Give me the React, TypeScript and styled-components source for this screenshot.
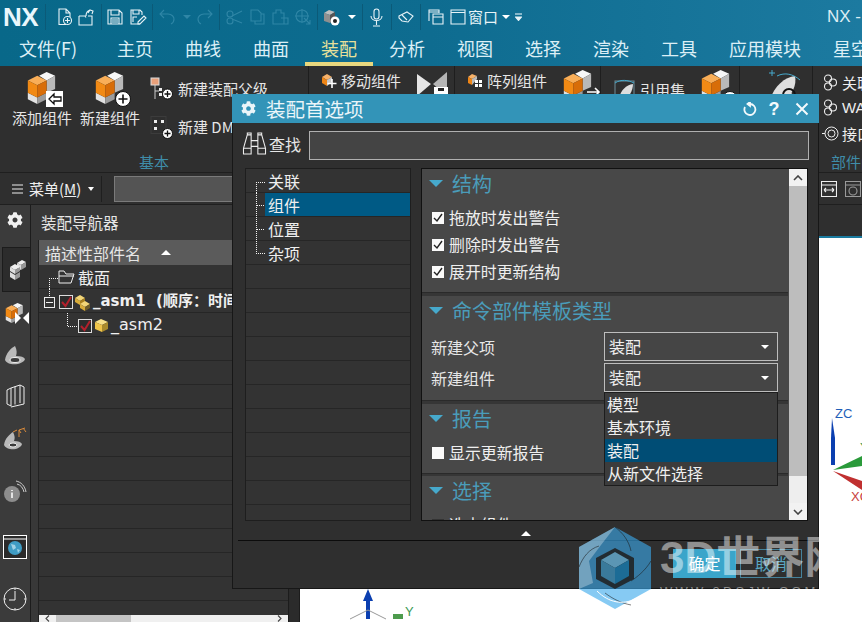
import React from "react";
import styled, { createGlobalStyle } from "styled-components";
import { FaCog } from "react-icons/fa";

const Global = createGlobalStyle`
  html, body { margin: 0; padding: 0; background: #fff; }
  * { box-sizing: border-box; }
  svg { display: block; flex: none; }
  body { font-family: "Noto Sans CJK SC", "Noto Sans", sans-serif; color: #e6e6e6; }
`;

const Page = styled.div`
  position: relative; width: 862px; height: 622px; overflow: hidden;
  display: flex; flex-direction: column; background: #2f2f2f;
`;

/* ---- title bar ---- */
const Head = styled.div`background: linear-gradient(90deg, #086889 0%, #0e6c90 50%, #1c7aa0 100%);`;
const QuickBar = styled.div`height: 34px; display: flex; align-items: center; white-space: nowrap; overflow: hidden;`;
const Logo = styled.div`
  width: 45px; padding-left: 3px; font: bold 26px/34px "Liberation Sans", sans-serif; color: #e9f6fb;
  letter-spacing: -0.5px; flex: none;
`;
const QSep = styled.span<{ $ml?: number }>`width: 1px; height: 26px; background: #0b5a78; margin-left: ${p => p.$ml ?? 0}px; flex: none;`;
const QIcon = styled.span<{ $ml: number; $off?: boolean }>`
  display: inline-flex; margin-left: ${p => p.$ml}px; flex: none;
  color: ${p => (p.$off ? "#2f86a6" : "#e8f3f7")};
`;
const QCaret = styled.span<{ $off?: boolean }>`
  display: block; width: 0; height: 0; border: 4px solid transparent; border-bottom: 0;
  border-top: 4px solid ${p => (p.$off ? "#2f86a6" : "#fff")};
`;
const QText = styled.span`margin-left: 2px; font-size: 15px; line-height: 20px; color: #e8f3f7;`;
const AppName = styled.span`margin-left: auto; font: 17px/20px "Liberation Sans", sans-serif; color: #dcedf3; width: 35px; flex: none; overflow: hidden;`;

const Tabs = styled.div`height: 32px; display: flex; padding-left: 3px; overflow: hidden;`;
const Tab = styled.div<{ $on?: boolean; $first?: boolean }>`
  padding: 0 16px; margin-right: ${p => (p.$first ? 8 : 0)}px; flex: none; font-size: 18px; line-height: 28px; white-space: nowrap;
  color: ${p => (p.$on ? "#e7e09a" : "#dceff6")};
  border-bottom: 4px solid ${p => (p.$on ? "#e8d77e" : "transparent")};
`;

/* ---- ribbon ---- */
const Ribbon = styled.div`height: 107px; display: flex; background: #2f2f2f; overflow: hidden; border-bottom: 1px solid #1f1f1f;`;
const BaseGroup = styled.div`
  width: 309px; flex: none; border-right: 1px solid #1e1e1e; display: flex; flex-direction: column;
`;
const GroupBody = styled.div`flex: 1; display: flex; padding: 6px 0 0 12px;`;
const GroupLabel = styled.div`height: 20px; font-size: 15px; line-height: 20px; color: #3f8da9; text-align: center; white-space: nowrap;`;
const BigTool = styled.div`
  width: 60px; margin-right: 8px; display: flex; flex-direction: column; align-items: center; font-size: 15px; line-height: 22px; white-space: nowrap;
`;
const IconStack = styled.span`position: relative; display: block; width: 34px; height: 34px; margin-bottom: 1px;`;
const Badge = styled.span<{ $r?: number; $b?: number }>`
  position: absolute; right: ${p => p.$r ?? -3}px; bottom: ${p => p.$b ?? 0}px; display: flex;
`;
const SmallCol = styled.div`display: flex; flex-direction: column; gap: 14px; margin: 5px 0 0 2px;`;
const SmallTool = styled.div`display: flex; align-items: center; gap: 5px; font-size: 15px; line-height: 24px; white-space: nowrap;`;
const RibbonCell = styled.div<{ $w: number; $pl: number }>`
  width: ${p => p.$w}px; padding: 4px 0 0 ${p => p.$pl}px; flex: none; border-right: 1px solid #1e1e1e;
  display: flex; align-items: flex-start;
`;
const CellTool = styled.div<{ $top?: number; $ml?: number }>`
  display: flex; align-items: center; gap: 4px; font-size: 15px; line-height: 22px; white-space: nowrap;
  margin-top: ${p => p.$top ?? 0}px; margin-left: ${p => p.$ml ?? 0}px; flex: none;
`;
const SideGroup = styled.div`flex: 1; padding: 4px 0 0 9px; display: flex; flex-direction: column; white-space: nowrap;`;
const SideTool = styled.div`display: flex; align-items: center; gap: 3px; height: 26.5px; font-size: 15px; color: #eee; font-family: "Liberation Sans", "Noto Sans CJK SC", sans-serif;`;
const SideLabel = styled.div`margin: 6px 0 0 9px; font-size: 15px; line-height: 20px; color: #3f8da9;`;

/* ---- menu row ---- */
const MenuRow = styled.div`height: 32px; display: flex; align-items: center; background: #2f2f2f; border-bottom: 1px solid #1f1f1f; flex: none;`;
const MenuBtn = styled.div`
  width: 102px; flex: none; padding-left: 12px; display: flex; align-items: center; gap: 6px; font-size: 15px;
  border-right: 1px solid #1f1f1f; height: 26px; color: #eee;
`;
const U = styled.span`text-decoration: underline;`;
const MenuCaret = styled.span`width: 0; height: 0; margin-left: 1px; border: 3.5px solid transparent; border-bottom: 0; border-top: 4px solid #fff;`;
const MenuInput = styled.div`width: 400px; height: 26px; margin-left: 12px; background: #545454; border: 1px solid #7a7a7a; flex: none;`;
const MenuIcons = styled.div`margin-left: auto; display: flex; gap: 8px; padding-right: 1px; color: #eee;`;
const DimIcon = styled.span`color: #9a9a9a;`;

/* ---- main ---- */
const Main = styled.div`flex: 1; min-height: 0; display: flex;`;
const Rail = styled.div`width: 31px; flex: none; background: #3b3b3b; border-right: 1px solid #1c1c1c; overflow: hidden;`;
const RailItem = styled.div<{ $h: number; $on?: boolean; $pb?: number }>`
  height: ${p => p.$h}px; display: flex; align-items: center; justify-content: center; color: #f0f0f0;
  padding-bottom: ${p => p.$pb ?? 0}px;
  ${p => p.$on && "background:#2c2c2c; border:1px solid #1c1c1c; border-right:none; margin:0 -1px 0 2px;"}
`;
const RailStack = styled.span`position: relative; display: block; width: 24px; height: 22px; margin-left: 2px;`;
const RailBow = styled.span`position: absolute; left: 11px; top: 9px;`;
const Nav = styled.div`width: 257px; flex: none; background: #383838; display: flex; flex-direction: column; overflow: hidden;`;
const NavTitle = styled.div`height: 35px; padding: 5px 0 0 10px; font-size: 15.5px; line-height: 24px; color: #e6e6e6;`;
const NavTable = styled.div`flex: 1; min-height: 0; margin-left: 7px; background: #333; border-left: 1px solid #222; display: flex; flex-direction: column; overflow: hidden;`;
const NavHead = styled.div`height: 25px; flex: none; background: #5b5b5b; padding-left: 6px; display: flex; align-items: center; font-size: 16px; white-space: nowrap;`;
const SortArrow = styled.span`margin-left: 20px; width: 0; height: 0; border: 5px solid transparent; border-top: 0; border-bottom: 5px solid #fff;`;
const TreeRow = styled.div`height: 24px; flex: none; display: flex; align-items: center; border-bottom: 1px solid #262626; white-space: pre;`;
const NavFill = styled.div`flex: 1; min-height: 0;`;
const RowGlyph = styled.svg``;
const RowText = styled.span<{ $bold?: boolean }>`
  margin-left: ${p => (p.$bold ? -24 : -25)}px; padding-top: 1px; font-size: ${p => (p.$bold ? 15 : 16)}px; font-weight: ${p => (p.$bold ? 700 : 400)}; color: #f0f0f0;
  font-family: "DejaVu Sans", "Noto Sans CJK SC", sans-serif; line-height: 22px;
`;
const CnText = styled.span`margin-left: 3px; font-size: 16px; line-height: 22px; color: #eee;`;
const HScroll = styled.div`height: 7px; flex: none; background: #f0f0f0; display: flex; align-items: center; color: #444;`;
const HBtn = styled.span`width: 17px; flex: none; display: flex; justify-content: center;`;
const HThumb = styled.div`width: 75px; height: 7px; background: #c4c4c4;`;
const HEnd = styled(HBtn)`margin-left: auto;`;
const Sash = styled.div`width: 12px; flex: none; background: #2b2b2b; border-left: 1px solid #1c1c1c; border-right: 1px solid #1c1c1c;`;
const CanvasCol = styled.div`flex: 1; min-width: 0; display: flex; flex-direction: column;`;
const CanvasTop = styled.div`height: 33px; flex: none; background: #2f2f2f; border-bottom: 2px solid #1a7ba0;`;
const Canvas = styled.div`flex: 1; position: relative; background: #fff; overflow: hidden;`;
const Triad = styled.div<{ $l: number; $t: number }>`position: absolute; left: ${p => p.$l}px; top: ${p => p.$t}px;`;
const AxisSvgText = styled.text<{ $c: string }>`font: 13px "Liberation Sans", sans-serif; fill: ${p => p.$c};`;

/* ---- dialog ---- */
const Dialog = styled.div`
  position: absolute; left: 232px; top: 94px; width: 587px; height: 495px; background: #2f2f2f;
  border: 1px solid #171717; border-top: none; display: flex; flex-direction: column;
`;
const DTitle = styled.div`
  height: 29px; flex: none; background: #3394b8; display: flex; align-items: center; padding-left: 9px; color: #eaf5f9;
  font-size: 19.5px; margin: 0 -1px;
`;
const DTitleText = styled.span`margin-left: 10px; line-height: 26px;`;
const DTitleBtns = styled.div`margin-left: auto; display: flex; align-items: center; gap: 10px; padding-right: 10px; color: #f4fafc;`;
const DHelp = styled.span`font: bold 18px/20px "Liberation Sans", sans-serif; width: 14px; text-align: center; margin-right: 4px;`;
const FindRow = styled.div`display: flex; align-items: center; padding: 8px 9px 0 9px; height: 37px; flex: none;`;
const FindGlyph = styled.span`margin-bottom: 5px; flex: none;`;
const FindLabel = styled.span`font-size: 16px; margin: 0 8px 4px 2px; line-height: 22px; flex: none;`;
const FindInput = styled.div`flex: 1; height: 29px; background: #444; border: 1px solid #b0b0b0;`;
const Body = styled.div`height: 353px; flex: none; margin-top: 8px; display: flex; padding-left: 12px;`;
const OptTree = styled.div`
  width: 166px; flex: none; background: #333; border: 1px solid #1e1e1e; overflow: hidden; display: flex; flex-direction: column;
`;
const OptRow = styled.div`height: 24px; flex: none; display: flex; align-items: stretch; border-bottom: 1px solid #262626;`;
const OptText = styled.div<{ $sel?: boolean }>`
  flex: 1; padding-left: 3px; font-size: 16px; line-height: 25px; color: #efefef;
  background: ${p => (p.$sel ? "#005a85" : "transparent")};
`;
const Panel = styled.div`
  width: 387px; flex: none; margin-left: 10px; background: #484848; border: 1px solid #111; display: flex; overflow: hidden;
`;
const PanelFlow = styled.div`width: 366px; flex: none; overflow: hidden;`;
const Section = styled.div<{ $h: number; $open?: boolean }>`height: ${p => p.$h}px; overflow: ${p => (p.$open ? "visible" : "hidden")};`;
const SectionGap = styled.div<{ $h?: number }>`height: ${p => p.$h ?? 4}px; background: #363636; border-top: 1px solid #2a2a2a;`;
const SecHead = styled.div`
  height: 29px; display: flex; align-items: center; padding-left: 7px; color: #4a9cba; font-size: 20px; line-height: 28px;
`;
const SecTri = styled.span`
  width: 0; height: 0; border: 7px solid transparent; border-bottom: 0; border-top: 7px solid #46a9cc; margin-right: 9px; flex: none;
`;
const CheckList = styled.div`padding: 6px 0 0 10px;`;
const CheckRow = styled.div`height: 27px; display: flex; align-items: center; gap: 5px; font-size: 15.9px; color: #efefef; white-space: nowrap;`;
const CheckBox = styled.span<{ $dim?: boolean }>`
  width: 12px; height: 12px; flex: none; background: ${p => (p.$dim ? "#333" : "#fafafa")}; display: flex; align-items: center; justify-content: center; color: #222;
`;
const FormRows = styled.div`padding: 7px 0 0 9px; display: flex; flex-direction: column; gap: 2px;`;
const FormRow = styled.div`height: 29px; display: flex; align-items: center; justify-content: space-between; padding-right: 10px; font-size: 16px;`;
const SelectWrap = styled.div`position: relative; width: 174px; flex: none;`;
const Select = styled.div`
  height: 29px; border: 1px solid #bdbdbd; background: #454545; padding-left: 4px; font-size: 16px; line-height: 27px; color: #eee;
  display: flex; justify-content: space-between; align-items: center;
`;
const Caret = styled.span`
  width: 0; height: 0; margin-right: 8px; border: 4px solid transparent; border-bottom: 0; border-top: 4px solid #fff;
`;
const Popup = styled.div`
  position: absolute; left: 0; top: 29px; width: 174px; background: #3c3c3c; border: 1px solid #1d1d1d; z-index: 3;
`;
const PopItem = styled.div<{ $sel?: boolean }>`
  height: 23px; padding-left: 2px; font-size: 16px; line-height: 22px; color: #efefef;
  background: ${p => (p.$sel ? "#004d75" : "transparent")};
`;
const VScroll = styled.div`
  width: 18px; flex: none; margin-left: 1px; background: #eeeeee; display: flex; flex-direction: column;
`;
const VBtn = styled.div`height: 17px; flex: none; background: #f2f2f2; display: flex; align-items: center; justify-content: center; color: #444;`;
const VThumb = styled.div`height: 290px; flex: none; background: #bdbdbd;`;
const VEnd = styled.div`margin-top: auto;`;
const Collapse = styled.div`height: 19px; flex: none; display: flex; justify-content: center; align-items: flex-end; padding: 0 0 4px 0;`;
const UpTri = styled.span`width: 0; height: 0; border: 5px solid transparent; border-top: 0; border-bottom: 5px solid #fff;`;
const Rule = styled.div`height: 1px; margin-left: 5px; background: #0c0c0c; flex: none;`;
const Footer = styled.div`display: flex; justify-content: flex-end; gap: 4px; padding: 8px 16px 0 0;`;
const PrimaryBtn = styled.div`width: 63px; height: 29px; background: #3aa5ca; font-size: 16px; line-height: 29px; text-align: center; color: #fff;`;
const GhostBtn = styled.div`width: 62px; height: 29px; border: 1px solid #45829b; font-size: 16px; line-height: 27px; text-align: center; color: #59a6c2;`;

/* ---- watermark ---- */
const Mark = styled.div`position: absolute; left: 579px; top: 527px; pointer-events: none; z-index: 5; display: flex;`;
const MarkWords = styled.div`margin-left: 9px; padding-top: 6px; color: rgba(255,255,255,.48); white-space: nowrap;`;
const MarkBig = styled.div`font: bold 44px/50px "Liberation Sans", "Noto Sans CJK SC", sans-serif; height: 52px;`;
const MarkSmall = styled.div`font: 13px/14px "Liberation Sans", sans-serif; letter-spacing: 3.2px;`;

/* ---- drawings ---- */
const S = (p: { w: number; h: number; children: React.ReactNode }) => (
  <svg width={p.w} height={p.h} viewBox={`0 0 ${p.w} ${p.h}`} fill="none" stroke="currentColor" strokeWidth={1.1}>
    {p.children}
  </svg>
);

const Blocks = ({ size = 32 }: { size?: number }) => (
  <svg width={size} height={size} viewBox="0 0 32 34">
    <polygon points="14,4 22,0 31,4 22,9" fill="#f7f7f7" />
    <polygon points="22,9 31,4 31,18 22,22" fill="#b9b9b9" />
    <polygon points="2,22 12,27 12,34 2,29" fill="#e2e2e2" />
    <polygon points="12,27 22,22 22,29 12,34" fill="#9c9c9c" />
    <polygon points="2,9 12,4 22,9 12,14" fill="#f9ae58" />
    <polygon points="2,9 12,14 12,27 2,22" fill="#f28a14" />
    <polygon points="12,14 22,9 22,22 12,27" fill="#d86d08" />
  </svg>
);
const PlusBadge = ({ r = 7 }: { r?: number }) => (
  <svg width={r * 2} height={r * 2} viewBox="0 0 16 16">
    <circle cx="8" cy="8" r="7.5" fill="#fff" stroke="#111" />
    <path d="M8 3.5v9M3.5 8h9" stroke="#111" strokeWidth="1.6" />
  </svg>
);
const ArrowBadge = () => (
  <svg width="17" height="16" viewBox="0 0 17 16">
    <rect width="17" height="16" fill="#fff" />
    <path d="M8 3L3 8l5 5v-3h7V6H8z" fill="#fff" stroke="#111" strokeWidth="1.3" />
  </svg>
);
const ParentTree = () => (
  <svg width="23" height="24" viewBox="0 0 23 24">
    <rect x="1" y="1" width="8" height="7" fill="#e8a07a" stroke="#ddd" />
    <path d="M5 8v14M5 14h4" stroke="#ccc" />
    <rect x="9" y="11" width="3" height="3" fill="#eee" /><rect x="9" y="16" width="3" height="3" fill="#eee" />
    <circle cx="17.5" cy="17" r="5" fill="#fff" stroke="#111" />
    <path d="M17.5 14v6M14.5 17h6" stroke="#111" strokeWidth="1.3" />
  </svg>
);
const DmIcon = () => (
  <svg width="23" height="23" viewBox="0 0 23 23">
    <rect x="1" y="0.5" width="15" height="17" fill="none" stroke="#3c3c3c" />
    <rect x="4" y="4" width="3" height="3" fill="#eee" /><rect x="11" y="4" width="3" height="3" fill="#eee" />
    <rect x="4" y="11" width="3" height="3" fill="#eee" />
    <circle cx="17.5" cy="17.5" r="5" fill="#fff" stroke="#111" />
    <path d="M17.5 14.5v6M14.5 17.5h6" stroke="#111" strokeWidth="1.3" />
  </svg>
);
const MoveIcon = () => (
  <svg width="16" height="16" viewBox="0 0 16 16">
    <polygon points="1,4 6,1 11,4 6,7" fill="#f7b26a" /><polygon points="1,4 6,7 6,13 1,10" fill="#ee8516" />
    <polygon points="6,7 11,4 11,9 6,13" fill="#c9c9c9" />
    <path d="M11 6v9M6.5 10.5h9" stroke="#fff" strokeWidth="1.6" />
  </svg>
);
const ArrayIcon = () => (
  <svg width="16" height="16" viewBox="0 0 16 16">
    <polygon points="1,4 5,1 10,3 5,6" fill="#f7b26a" /><polygon points="1,4 5,6 5,12 1,10" fill="#ee8516" />
    <polygon points="5,6 10,3 10,6 5,12" fill="#bbb" />
    <g fill="#fff"><rect x="8" y="7" width="3" height="3" /><rect x="12" y="7" width="3" height="3" /><rect x="8" y="11" width="3" height="3" /><rect x="12" y="11" width="3" height="3" /></g>
  </svg>
);
const Bowtie = () => (
  <svg width="32" height="30" viewBox="0 0 32 30">
    <polygon points="1,2 15,12 1,24" fill="#e6e6e6" /><polygon points="31,0 17,12 31,24" fill="#b5b5b5" />
    <rect x="18" y="15" width="14" height="12" fill="#fff" /><rect x="22" y="16" width="6" height="3" fill="#222" />
  </svg>
);
const RefSet = () => (
  <svg width="23" height="24" viewBox="0 0 23 24">
    <rect x="2" y="3" width="19" height="20" fill="none" stroke="#6f8e9a" />
    <path d="M6 20C8 12 13 7 20 6c0 7-4 13-9 16z" fill="#dedede" />
    <path d="M2 5C8 1 15 2 21 5" stroke="#43a9cc" fill="none" />
  </svg>
);
const SheetIcon = () => (
  <svg width="36" height="34" viewBox="0 0 36 34">
    <path d="M5 30C9 16 20 7 30 6c2 9-3 20-12 25z" fill="#dfdfdf" />
    <path d="M4 3h6M7 0v6" stroke="#46a9cc" />
    <path d="M12 6C20 2 28 4 35 10" stroke="#46a9cc" fill="none" />
    <circle cx="24" cy="25" r="6" fill="none" stroke="#111" strokeWidth="2" />
    <circle cx="24" cy="25" r="3" fill="#ddd" />
  </svg>
);
const Knot = () => (
  <svg width="17" height="17" viewBox="0 0 17 17" fill="none" stroke="#eee" strokeWidth="1.1">
    <circle cx="6" cy="4.5" r="3.5" /><circle cx="11" cy="8.5" r="3.5" /><circle cx="6" cy="12.5" r="3.5" />
  </svg>
);
const Ring = () => (
  <svg width="17" height="17" viewBox="0 0 17 17" fill="none" stroke="#eee">
    <circle cx="9.5" cy="8.5" r="6.5" /><circle cx="9.5" cy="8.5" r="3.5" /><path d="M0 8.5h3" />
  </svg>
);
const Binoculars = () => (
  <svg width="25" height="23" viewBox="0 0 25 24" fill="none" stroke="#eee" strokeWidth="1.1">
    <path d="M1 23v-6L5 3h4v20zM24 23v-6L20 3h-4v20zM9 9h7M9 15h7M1 17h8M16 17h8M5 3V1h4v2M16 3V1h4v2" />
  </svg>
);
const Dash = { stroke: "#f4f4f4", strokeDasharray: "1 1", fill: "none", shapeRendering: "crispEdges" as const };
const ExpandBox = () => (
  <svg width="78" height="24" viewBox="0 0 78 24">
    <path d="M10.500 0v8" {...Dash} />
    <rect x="5.500" y="8.500" width="10" height="10" fill="none" stroke="#eee" />
    <path d="M7 13.500h7" stroke="#eee" />
    <rect x="20.500" y="6.500" width="13" height="13" fill="#2c2c2c" stroke="#ddd" />
    <path d="M23 13l3.500 4L32 8" stroke="#b3202c" strokeWidth="2" fill="none" />
    <polygon points="36,9 41,6 46,9 41,12" fill="#f3d678" /><polygon points="36,9 41,12 41,16 36,13" fill="#d9ad3a" />
    <polygon points="41,12 46,9 46,13 41,16" fill="#a9801e" />
    <polygon points="41,15 46,12 51,15 46,18" fill="#f3d678" /><polygon points="41,15 46,18 46,22 41,19" fill="#d9ad3a" />
    <polygon points="46,18 51,15 51,19 46,22" fill="#6f5c28" />
  </svg>
);
const ChildRowGlyph = () => (
  <svg width="97" height="24" viewBox="0 0 97 24">
    <path d="M28.500 0v13.500h10" {...Dash} />
    <rect x="39.500" y="6.500" width="13" height="13" fill="#2c2c2c" stroke="#ddd" />
    <path d="M42 13l3.500 4L51 8" stroke="#b3202c" strokeWidth="2" fill="none" />
    <polygon points="56,9 62,6 69,9 63,12" fill="#f6e08a" /><polygon points="56,9 63,12 63,19 56,16" fill="#efc44a" />
    <polygon points="63,12 69,9 69,16 63,19" fill="#a98a2c" />
  </svg>
);
const FolderRowGlyph = () => (
  <svg width="36" height="24" viewBox="0 0 36 24">
    <path d="M10.500 24V13.500h9" {...Dash} />
    <path d="M20 6h5l2 3h8l-3 9H20z M20 11h15" stroke="#eee" fill="none" />
  </svg>
);

const OptGlyph = ({ last }: { last?: boolean }) => (
  <RowGlyph width="19" height="24" viewBox="0 0 19 24">
    <path d={last ? "M10.500 0v12.500h8" : "M10.500 0v24M10.500 12.500h8"} {...Dash} />
  </RowGlyph>
);
const OptGlyphFirst = () => (
  <RowGlyph width="19" height="24" viewBox="0 0 19 24">
    <path d="M10.500 24V13.500h8" {...Dash} />
  </RowGlyph>
);

const emptyNav = Array.from({ length: 11 });
const emptyOpt = Array.from({ length: 11 });

export default function App() {
  return (
    <Page>
      <Global />
      <Head>
        <QuickBar>
          <Logo>NX</Logo>
          <QSep />
          <QIcon $ml={11}><S w={15} h={18}><path d="M9 16.500H2V1h7l4 4v4M9 1v4h4" /><circle cx="10.500" cy="12.500" r="4" /><path d="M10.500 10v5M8 12.500h5" /></S></QIcon>
          <QIcon $ml={6}><S w={17} h={18}><path d="M1 8h6l1 1.500M1 8v9h13V8h-4M10 5l2-3 3 1-1 3M12 2c-3 1-4 3-4 6" /></S></QIcon>
          <QSep $ml={6} />
          <QIcon $ml={5}><S w={16} h={16}><path d="M1 1h11l3 3v11H1zM4 1v5h8V1M4 15V9h8v6M5 11h6M5 13h6" /></S></QIcon>
          <QIcon $ml={7}><S w={17} h={17}><path d="M10 15H1V1h9l2 2v3M3 1v4h6V1M3 13V8h4" /><path d="M8 13l6-6 2 2-6 6H8z" /></S></QIcon>
          <QSep $ml={5} />
          <QIcon $ml={6} $off><S w={16} h={16}><path d="M5 1L1 5l4 4M1 5h8c4 0 6 3 6 5s-1 4-3 5" /></S></QIcon>
          <QIcon $ml={8} $off><QCaret $off /></QIcon>
          <QIcon $ml={6} $off><S w={16} h={16}><path d="M11 1l4 4-4 4M15 5H7C3 5 1 8 1 10s1 4 3 5" /></S></QIcon>
          <QSep $ml={6} />
          <QIcon $ml={6} $off><S w={17} h={16}><circle cx="4" cy="5" r="3" /><circle cx="4" cy="12" r="3" /><path d="M6 7l10-5M6 10l10 4" /></S></QIcon>
          <QIcon $ml={7} $off><S w={15} h={16}><path d="M1 1h7l3 3v8H1zM11 5h3v10H5v-3" /></S></QIcon>
          <QIcon $ml={7} $off><S w={17} h={16}><path d="M1 4h3V1h5v3h3v11H1zM9 9h7v6H9" /></S></QIcon>
          <QIcon $ml={6} $off><S w={16} h={16}><circle cx="7" cy="7" r="6" /><path d="M7 0v14M0 7h14M9 9l6 6M15 11v4h-4" /></S></QIcon>
          <QSep $ml={6} />
          <QIcon $ml={5}>
            <svg width="18" height="18" viewBox="0 0 18 18">
              <polygon points="1,5 6,2 12,4 7,7" fill="#bdbdbd" /><polygon points="1,5 7,7 7,15 1,13" fill="#8f8f8f" /><polygon points="7,7 12,4 12,12 7,15" fill="#555" />
              <circle cx="12" cy="13" r="4.500" fill="#fff" /><circle cx="12" cy="13" r="2" fill="#222" />
            </svg>
          </QIcon>
          <QIcon $ml={7}><QCaret /></QIcon>
          <QSep $ml={6} />
          <QIcon $ml={7}><S w={13} h={19}><rect x="4" y="1" width="5" height="10" rx="2.500" /><path d="M1 8c0 6 11 6 11 0M6.500 13v4M3 18h7" /></S></QIcon>
          <QSep $ml={8} />
          <QIcon $ml={6}><S w={16} h={12}><path d="M1 5l8-4 6 4-5 6-6-1-3-3z" /><path d="M4 4l5 5" /></S></QIcon>
          <QSep $ml={6} />
          <QIcon $ml={7}><S w={16} h={16}><path d="M1 12V1h10v3M1 3h10M5 5h10v10H5zM5 8h10" /></S></QIcon>
          <QIcon $ml={6}><S w={16} h={16}><path d="M1 1h14v14H1zM1 3.500h14" /></S></QIcon>
          <QText>窗口</QText>
          <QIcon $ml={4}><QCaret /></QIcon>
          <QIcon $ml={5}><S w={7} h={8}><path d="M0 1h7" /><path d="M0.500 4h6L3.500 7.500z" fill="currentColor" /></S></QIcon>
          <AppName>NX - </AppName>
        </QuickBar>
        <Tabs>
          <Tab $first>文件(F)</Tab>
          <Tab>主页</Tab>
          <Tab>曲线</Tab>
          <Tab>曲面</Tab>
          <Tab $on>装配</Tab>
          <Tab>分析</Tab>
          <Tab>视图</Tab>
          <Tab>选择</Tab>
          <Tab>渲染</Tab>
          <Tab>工具</Tab>
          <Tab>应用模块</Tab>
          <Tab>星空</Tab>
        </Tabs>
      </Head>

      <Ribbon>
        <BaseGroup>
          <GroupBody>
            <BigTool>
              <IconStack><Blocks /><Badge $r={-4} $b={-1}><ArrowBadge /></Badge></IconStack>
              添加组件
            </BigTool>
            <BigTool>
              <IconStack><Blocks /><Badge $r={-4} $b={-1}><PlusBadge r={8} /></Badge></IconStack>
              新建组件
            </BigTool>
            <SmallCol>
              <SmallTool><ParentTree />新建装配父级</SmallTool>
              <SmallTool><DmIcon />新建 DM</SmallTool>
            </SmallCol>
          </GroupBody>
          <GroupLabel>基本</GroupLabel>
        </BaseGroup>
        <RibbonCell $w={146} $pl={12}>
          <CellTool><MoveIcon />移动组件</CellTool>
          <CellTool $ml={15} $top={2}><Bowtie /></CellTool>
        </RibbonCell>
        <RibbonCell $w={146} $pl={12}>
          <CellTool><ArrayIcon />阵列组件</CellTool>
          <CellTool $ml={14}><IconStack><Blocks /><Badge $r={-6} $b={7}><S w={14} h={10}><path d="M0 5h12M8 1l4 4-4 4" stroke="#fff" strokeWidth="1.600" /></S></Badge></IconStack></CellTool>
        </RibbonCell>
        <RibbonCell $w={139} $pl={12}>
          <CellTool $top={8}><RefSet />引用集</CellTool>
          <CellTool $ml={14}><IconStack><Blocks /><Badge $r={-5} $b={-3}><PlusBadge r={8} /></Badge></IconStack></CellTool>
        </RibbonCell>
        <RibbonCell $w={73} $pl={25}>
          <SheetIcon />
        </RibbonCell>
        <SideGroup>
          <SideTool><Knot />关联</SideTool>
          <SideTool><Knot />WAVE</SideTool>
          <SideTool><Ring />接口</SideTool>
          <SideLabel>部件间</SideLabel>
        </SideGroup>
      </Ribbon>

      <MenuRow>
        <MenuBtn>
          <S w={11} h={10}><path d="M0 1h11M0 5h11M0 9h11" /></S>
          <span>菜单(<U>M</U>)</span>
          <MenuCaret />
        </MenuBtn>
        <MenuInput />
        <MenuIcons>
          <S w={16} h={16}><path d="M0.500 0.500h15v15h-15zM0.500 4h15M3 9h10M3 9l2-2M3 9l2 2M13 9l-2-2M13 9l-2 2" /></S>
          <DimIcon><S w={16} h={16}><path d="M0.500 0.500h15v15h-15zM0.500 4h15" /><circle cx="8" cy="10" r="4" /></S></DimIcon>
        </MenuIcons>
      </MenuRow>

      <Main>
        <Rail>
          <RailItem $h={42} $pb={12}><FaCog size={16} /></RailItem>
          <RailItem $h={45} $on>
            <svg width="17" height="21" viewBox="0 0 17 21">
              <polygon points="8,4 13,1 17,3 12,6" fill="#eee" /><polygon points="12,6 17,3 17,8 12,11" fill="#999" /><polygon points="8,4 12,6 12,11 8,9" fill="#ddd" />
              <polygon points="1,8 6,5 11,8 6,11" fill="#eee" /><polygon points="1,8 6,11 6,15 1,12" fill="#ddd" /><polygon points="6,11 11,8 11,12 6,15" fill="#999" />
              <polygon points="1,13 6,16 6,21 1,18" fill="#ddd" /><polygon points="6,16 11,13 11,18 6,21" fill="#999" />
            </svg>
          </RailItem>
          <RailItem $h={43}>
            <RailStack>
              <Blocks size={20} />
              <RailBow><svg width="14" height="12" viewBox="0 0 14 12"><polygon points="0,0 6,6 0,12" fill="#fff" /><polygon points="14,0 8,6 14,12" fill="#fff" /></svg></RailBow>
            </RailStack>
          </RailItem>
          <RailItem $h={40}>
            <svg width="24" height="21" viewBox="0 0 24 21">
              <path d="M2 15C3 8 8 3 12 1c2 4 2 7 1 10 5 0 8 1 9 3-1 4-8 6-14 5-3-.5-5-2-6-4z" fill="#b9b9b9" />
              <ellipse cx="12" cy="15" rx="5" ry="2.500" fill="#3a3a3a" stroke="#eee" />
            </svg>
          </RailItem>
          <RailItem $h={42}>
            <svg width="19" height="24" viewBox="0 0 19 24" fill="none" stroke="#eee">
              <path d="M1 6l4-2v18l-4-2zM5 4l9-3 4 2v17l-13 3M9 2.500v18M14 1v18" />
            </svg>
          </RailItem>
          <RailItem $h={43}>
            <svg width="24" height="24" viewBox="0 0 24 24">
              <path d="M1 18C2 11 7 7 10 5c2 4 2 6 1 9 4 0 7 1 8 3-1 4-7 6-12 5-3-.5-5-2-6-4z" fill="#b9b9b9" />
              <ellipse cx="10" cy="18" rx="4" ry="2" fill="#3a3a3a" stroke="#eee" />
              <path d="M10 5l4-2M16 10V3l6-2M16 3l2 3M20 1l3 4" stroke="#d98a3a" fill="none" />
            </svg>
          </RailItem>
          <RailItem $h={64}>
            <svg width="24" height="24" viewBox="0 0 24 24">
              <circle cx="9" cy="14" r="8" fill="#8d8d8d" />
              <path d="M9 10v1M9 12.500V18" stroke="#fff" strokeWidth="1.500" />
              <path d="M14 4c4 1 6 4 7 8M13 1c5 1 9 5 10 11" stroke="#ccc" fill="none" />
            </svg>
          </RailItem>
          <RailItem $h={46}>
            <svg width="24" height="24" viewBox="0 0 24 24">
              <rect x="0.500" y="0.500" width="23" height="23" fill="#2a2a2a" stroke="#fff" />
              <path d="M1 4h22" stroke="#fff" />
              <circle cx="12" cy="13" r="7" fill="#3f9cc4" />
              <path d="M8 9l4 1 1 3-3 2zM14 14l3 1-2 3z" fill="#9fd0e4" />
            </svg>
          </RailItem>
          <RailItem $h={58}>
            <svg width="24" height="24" viewBox="0 0 24 24" fill="none" stroke="#eee">
              <circle cx="12" cy="12" r="11" /><path d="M12 4v9H6M12 1v2M1 12h2M21 12h2M12 21v2" />
            </svg>
          </RailItem>
        </Rail>
        <Nav>
          <NavTitle>装配导航器</NavTitle>
          <NavTable>
            <NavHead>描述性部件名<SortArrow /></NavHead>
            <TreeRow><FolderRowGlyph /><CnText>截面</CnText></TreeRow>
            <TreeRow><ExpandBox /><RowText $bold>{"_asm1  (顺序：时间顺序)"}</RowText></TreeRow>
            <TreeRow><ChildRowGlyph /><RowText>_asm2</RowText></TreeRow>
            {emptyNav.map((_, i) => <TreeRow key={i} />)}
            <NavFill />
            <HScroll>
              <HBtn><S w={5} h={7}><path d="M4 0.500L1 3.500l3 3" /></S></HBtn>
              <HThumb />
              <HEnd><S w={5} h={7}><path d="M1 0.500l3 3-3 3" /></S></HEnd>
            </HScroll>
          </NavTable>
        </Nav>
        <Sash />
        <CanvasCol>
          <CanvasTop />
          <Canvas>
            <Triad $l={47} $t={349}>
              <svg width="70" height="36" viewBox="0 0 70 36">
                <path d="M21 2l5 12h-3v18h-4V14h-3z" fill="#0b3fb0" />
                <path d="M3 32l18-9 18 9" stroke="#999" fill="none" />
                <rect x="46" y="27" width="10" height="5" fill="#4d9b4d" />
                <AxisSvgText $c="#3c9a55" x="58" y="29">Y</AxisSvgText>
              </svg>
            </Triad>
            <Triad $l={530} $t={164}>
              <svg width="32" height="100" viewBox="0 0 32 100">
                <AxisSvgText $c="#1f5fb8" x="5" y="16">ZC</AxisSvgText>
                <path d="M2 16l3 20v27H1V36z" fill="#0b3fb0" />
                <path d="M3 68l29-14v10z" fill="#2a9a3a" />
                <path d="M3 69l29 10v9z" fill="#c03030" />
                <AxisSvgText $c="#c84040" x="21" y="99">XC</AxisSvgText>
                <AxisSvgText $c="#3c9a55" x="30" y="50">Y</AxisSvgText>
              </svg>
            </Triad>
          </Canvas>
        </CanvasCol>
      </Main>

      <Dialog>
        <DTitle>
          <FaCog size={15} />
          <DTitleText>装配首选项</DTitleText>
          <DTitleBtns>
            <S w={14} h={14}><path d="M7 2a5.500 5.500 0 1 1-5 3M7 0v4L4.500 2z" strokeWidth="1.800" /></S>
            <DHelp>?</DHelp>
            <S w={14} h={14}><path d="M1.500 1.500l11 11M12.500 1.500l-11 11" strokeWidth="2" /></S>
          </DTitleBtns>
        </DTitle>
        <FindRow>
          <FindGlyph><Binoculars /></FindGlyph>
          <FindLabel>查找</FindLabel>
          <FindInput />
        </FindRow>
        <Body>
          <OptTree>
            <OptRow><OptGlyphFirst /><OptText>关联</OptText></OptRow>
            <OptRow><OptGlyph /><OptText $sel>组件</OptText></OptRow>
            <OptRow><OptGlyph /><OptText>位置</OptText></OptRow>
            <OptRow><OptGlyph last /><OptText>杂项</OptText></OptRow>
            {emptyOpt.map((_, i) => <OptRow key={i} />)}
          </OptTree>
          <Panel>
            <PanelFlow>
              <Section $h={123}>
                <SecHead><SecTri />结构</SecHead>
                <CheckList>
                  {["拖放时发出警告", "删除时发出警告", "展开时更新结构"].map(t => (
                    <CheckRow key={t}>
                      <CheckBox><S w={10} h={10}><path d="M1 5l3 3 5-7" strokeWidth="1.400" /></S></CheckBox>
                      {t}
                    </CheckRow>
                  ))}
                </CheckList>
              </Section>
              <SectionGap />
              <Section $h={104} $open>
                <SecHead><SecTri />命令部件模板类型</SecHead>
                <FormRows>
                  <FormRow>新建父项<SelectWrap><Select>装配<Caret /></Select></SelectWrap></FormRow>
                  <FormRow>新建组件
                    <SelectWrap>
                      <Select>装配<Caret /></Select>
                      <Popup>
                        <PopItem>模型</PopItem>
                        <PopItem>基本环境</PopItem>
                        <PopItem $sel>装配</PopItem>
                        <PopItem>从新文件选择</PopItem>
                      </Popup>
                    </SelectWrap>
                  </FormRow>
                </FormRows>
              </Section>
              <SectionGap />
              <Section $h={69}>
                <SecHead><SecTri />报告</SecHead>
                <CheckList>
                  <CheckRow><CheckBox />显示更新报告</CheckRow>
                </CheckList>
              </Section>
              <SectionGap $h={3} />
              <Section $h={60}>
                <SecHead><SecTri />选择</SecHead>
                <CheckList>
                  <CheckRow><CheckBox $dim />选中组件</CheckRow>
                </CheckList>
              </Section>
            </PanelFlow>
            <VScroll>
              <VBtn><S w={10} h={6}><path d="M1 5l4-4 4 4" strokeWidth="1.600" /></S></VBtn>
              <VThumb />
              <VEnd><VBtn><S w={10} h={6}><path d="M1 1l4 4 4-4" strokeWidth="1.600" /></S></VBtn></VEnd>
            </VScroll>
          </Panel>
        </Body>
        <Collapse><UpTri /></Collapse>
        <Rule />
        <Footer>
          <PrimaryBtn>确定</PrimaryBtn>
          <GhostBtn>取消</GhostBtn>
        </Footer>
      </Dialog>

      <Mark>
        <svg width="72" height="82" viewBox="0 0 72 82">
          <polygon points="36,0 72,20 72,62 36,82 0,62 0,20" fill="rgba(60,170,235,.62)" />
          <polygon points="36,0 0,20 0,62 14,56 10,34 22,18" fill="rgba(255,255,255,.3)" />
          <path d="M36 0c8 6 14 14 16 24M72 34c-6 10-14 16-20 20M52 78c-10-2-18-6-26-12M0 40c4-10 10-18 20-21" stroke="rgba(25,25,25,.55)" fill="none" />
          <path d="M18 64c12 12 26 14 38 8" stroke="#fff" fill="none" />
          <polygon points="36,21 55,31 55,52 36,62 17,52 17,31" fill="rgba(30,30,30,.85)" />
          <polygon points="36,25 50,33 36,41 22,33" fill="#5b96b4" />
          <polygon points="22,33 36,41 36,57 22,49" fill="#3a7a9b" />
          <polygon points="50,33 36,41 36,57 50,49" fill="#1c6c96" />
        </svg>
        <MarkWords>
          <MarkBig>3D世界网</MarkBig>
          <MarkSmall>WWW.3DSJW.COM</MarkSmall>
        </MarkWords>
      </Mark>
    </Page>
  );
}
